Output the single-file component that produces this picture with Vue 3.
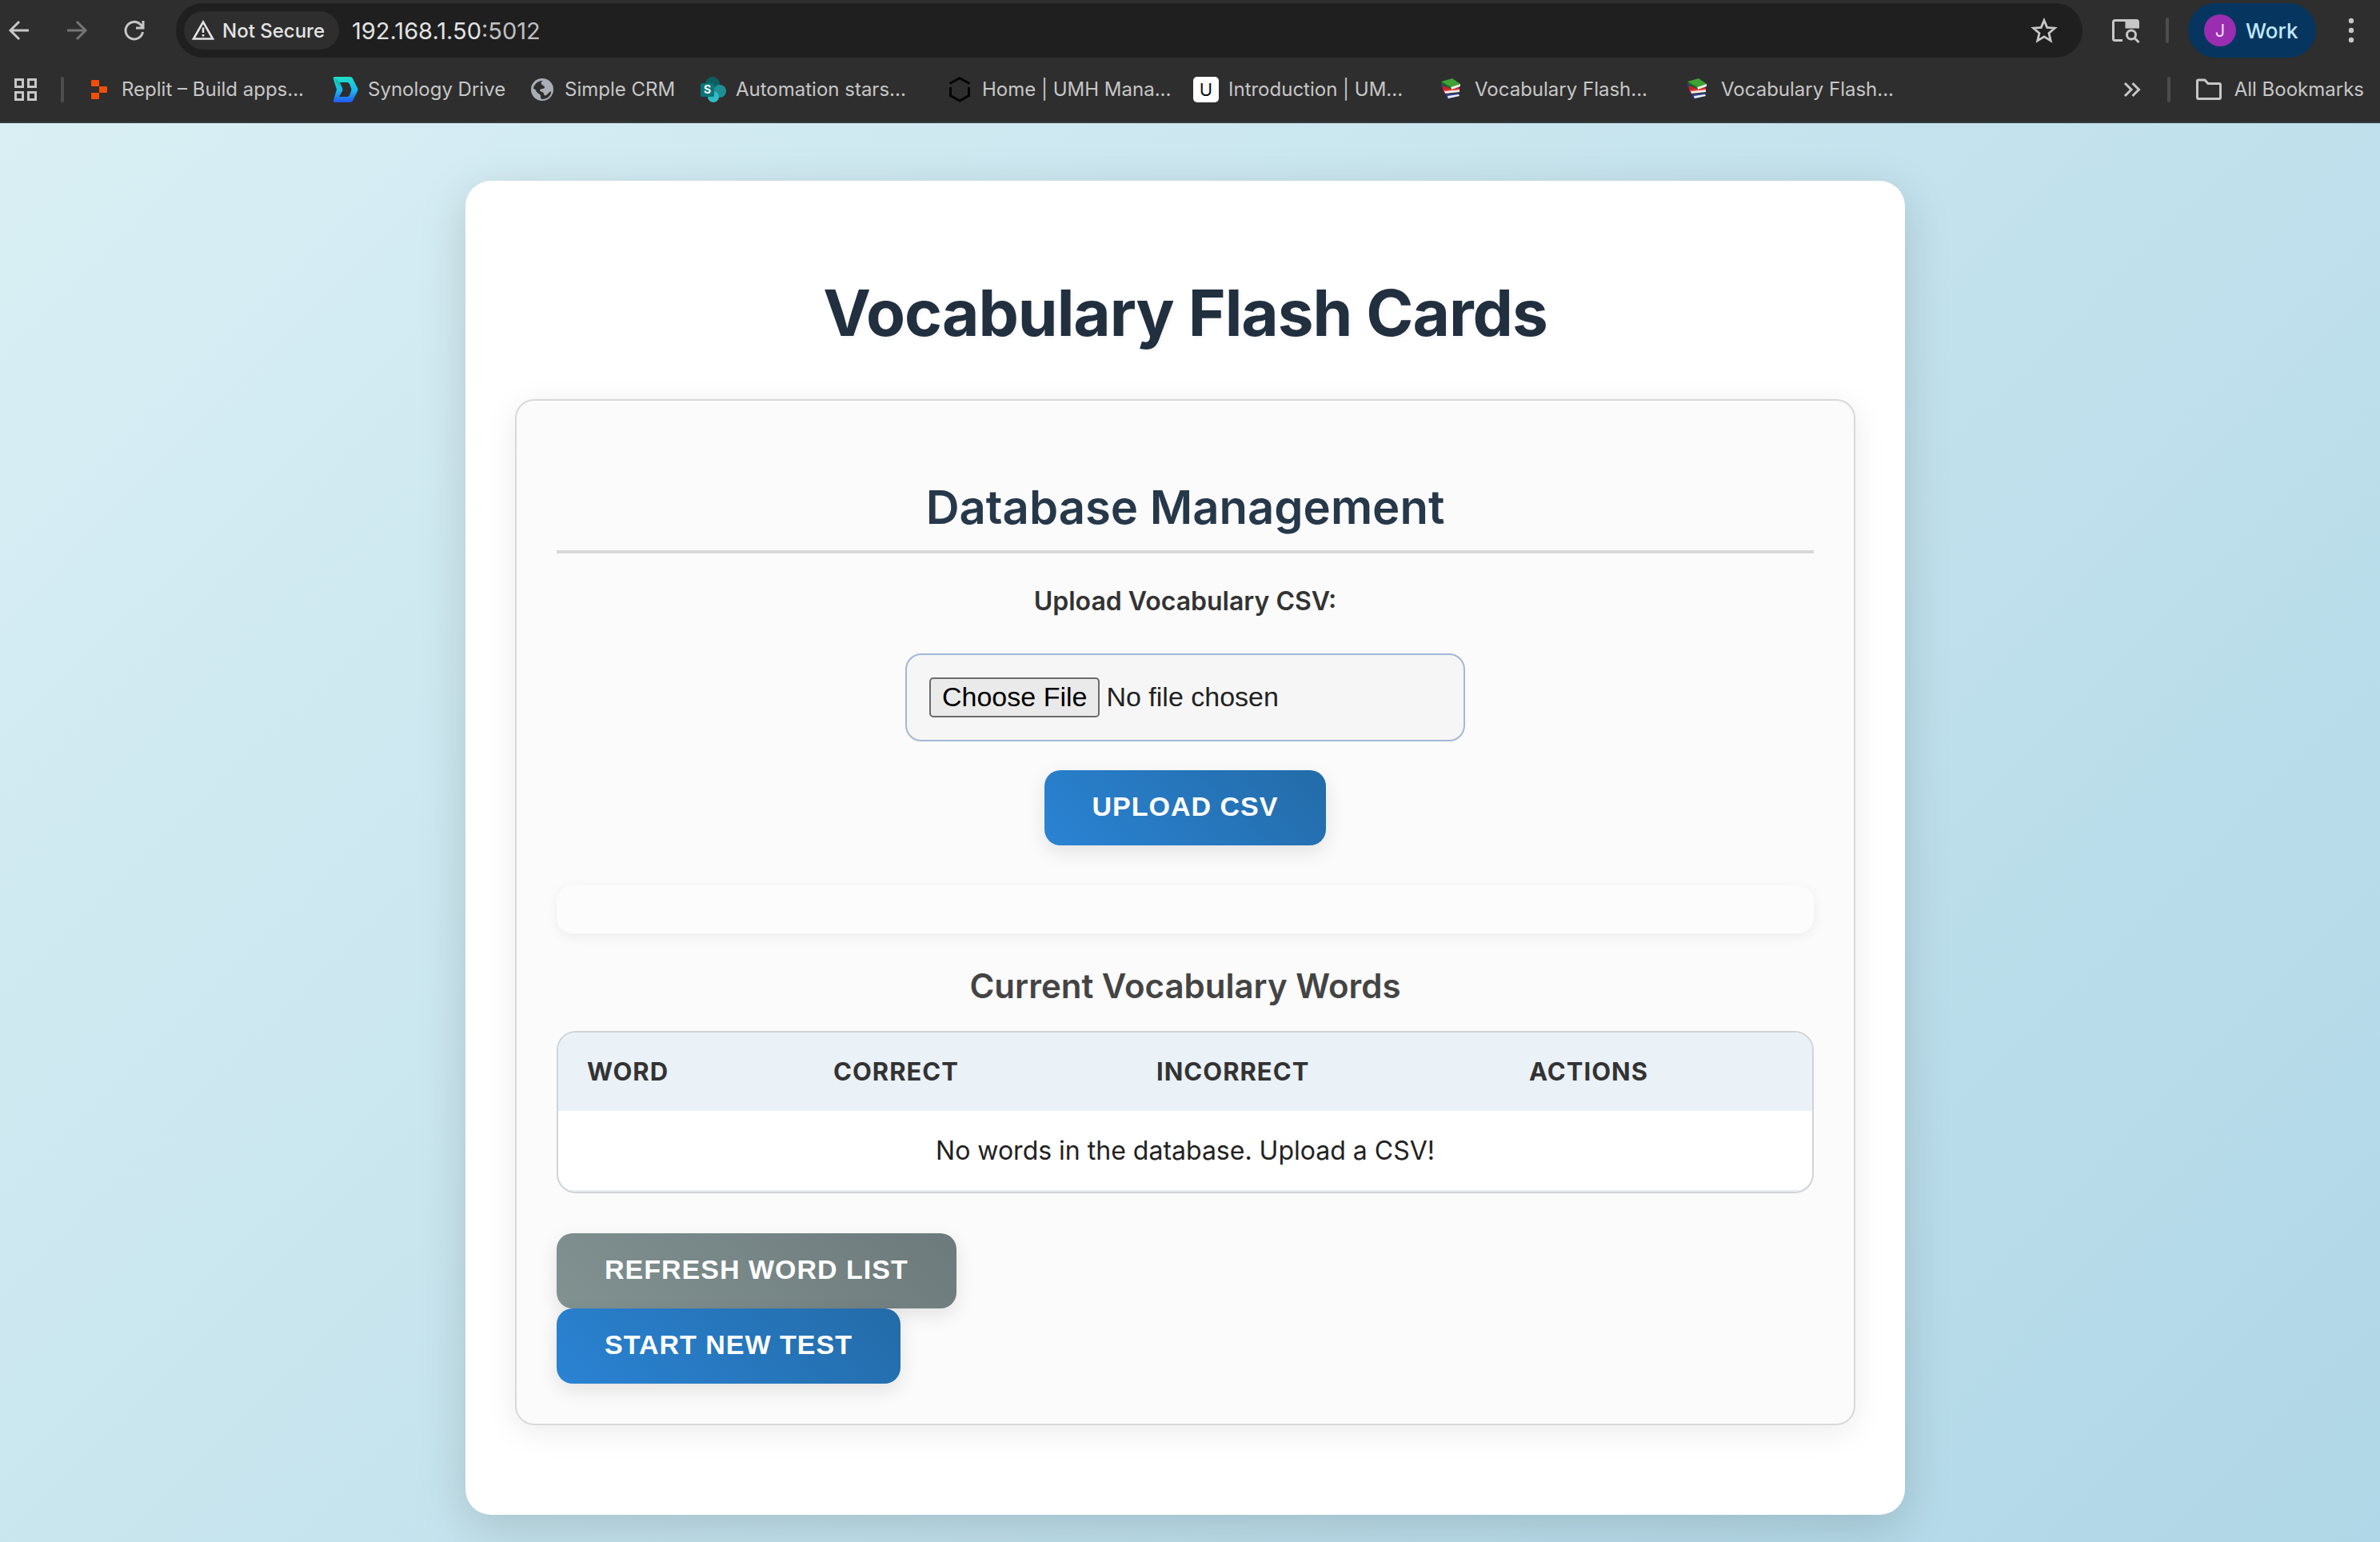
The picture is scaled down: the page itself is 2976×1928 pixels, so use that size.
<script setup>
import { ref } from 'vue'

const bookmarks = [
  { label: 'Replit – Build apps...', icon: 'replit', size: 'full' },
  { label: 'Synology Drive', icon: 'synology', size: 'mid' },
  { label: 'Simple CRM', icon: 'globe', size: 'small' },
  { label: 'Automation stars...', icon: 'sharepoint', size: 'full' },
  { label: 'Home | UMH Mana...', icon: 'umh', size: 'full' },
  { label: 'Introduction | UM...', icon: 'intro', size: 'full' },
  { label: 'Vocabulary Flash...', icon: 'books', size: 'full' },
  { label: 'Vocabulary Flash...', icon: 'books', size: 'full' },
]
const columns = ['Word', 'Correct', 'Incorrect', 'Actions']
const address = ref('192.168.1.50:5012')
</script>

<template>
  <div class="window">
    <header class="chrome">
      <div class="toolbar">
        <nav class="nav">
          <button class="icon-btn" aria-label="Back">
            <svg width="32" height="32" viewBox="0 0 32 32" fill="none" stroke="#c7c7c7" stroke-width="3"><path d="M28 16H6M16 5L5 16l11 11" /></svg>
          </button>
          <button class="icon-btn" aria-label="Forward">
            <svg width="32" height="32" viewBox="0 0 32 32" fill="none" stroke="#757575" stroke-width="3"><path d="M4 16h22M16 5l11 11-11 11" /></svg>
          </button>
          <button class="icon-btn" aria-label="Reload">
            <svg width="32" height="32" viewBox="0 0 32 32" fill="none" stroke="#c7c7c7" stroke-width="3"><path d="M26.500 18A10.800 10.800 0 1 1 23.500 8.500L27 12M27 4v9h-9" /></svg>
          </button>
        </nav>
        <div class="omnibox">
          <button class="chip">
            <svg width="30" height="28" viewBox="0 0 30 28" fill="none" stroke="#e3e3e3" stroke-width="2.600"><path d="M15 3.500L27 24.500H3z" /><path d="M15 10.500v6.500M15 19v2.600" /></svg>
            <span>Not Secure</span>
          </button>
          <div class="url" role="textbox" aria-label="Address">{{ address.split(':')[0] }}<span class="port">:{{ address.split(':')[1] }}</span></div>
          <button class="icon-btn star" aria-label="Bookmark this page">
            <svg width="36" height="36" viewBox="0 0 36 36" fill="none" stroke="#c7c7c7" stroke-width="2.800"><path d="M18 5.500l3.700 8.900 9.600.8-7.300 6.300 2.200 9.400-8.200-5-8.200 5 2.200-9.400-7.300-6.300 9.600-.8z" /></svg>
          </button>
        </div>
        <div class="tools">
          <button class="icon-btn" aria-label="Search tabs">
            <svg width="36" height="36" viewBox="0 0 36 36" fill="none" stroke="#c7c7c7" stroke-width="3"><path d="M14 30.500H4.500a2 2 0 0 1-2-2v-21a2 2 0 0 1 2-2h27a2 2 0 0 1 2 2V14H19V6" /><path d="M19 5h15v10H19z" fill="#c7c7c7" stroke="none" /><circle cx="25" cy="23.500" r="5.500" /><path d="M29 27.500l5.500 5.500" /></svg>
          </button>
          <span class="sep"></span>
          <button class="profile"><span class="avatar">J</span><span>Work</span></button>
          <button class="icon-btn" aria-label="Menu">
            <svg width="8" height="32" viewBox="0 0 8 32" fill="#c7c7c7"><circle cx="4" cy="4" r="3.200" /><circle cx="4" cy="16" r="3.200" /><circle cx="4" cy="28" r="3.200" /></svg>
          </button>
        </div>
      </div>
      <div class="bookmarks">
        <button class="icon-btn" aria-label="Apps">
          <svg width="32" height="32" viewBox="0 0 32 32" fill="none" stroke="#c7c7c7" stroke-width="3"><path d="M3.500 3.500h9v9h-9zM19.500 3.500h9v9h-9zM3.500 19.500h9v9h-9zM19.500 19.500h9v9h-9z" /></svg>
        </button>
        <span class="sep"></span>
        <nav class="links">
          <a v-for="(b, i) in bookmarks" :key="i" href="#" class="bookmark" :class="b.size">
            <svg v-if="b.icon === 'replit'" width="32" height="32" viewBox="0 0 32 32" fill="#f04e0b"><path d="M7 4h8q1 0 1 1v7H7q-1 0-1-1V5q0-1 1-1zM16 12h9q1 0 1 1v6q0 1-1 1h-9zM7 20h9v7q0 1-1 1H7q-1 0-1-1v-6q0-1 1-1z" /></svg>
            <svg v-else-if="b.icon === 'synology'" width="32" height="32" viewBox="0 0 32 32">
              <defs><linearGradient id="drive" x1="0" y1="0" x2="0" y2="1"><stop offset="0" stop-color="#1fe0c4" /><stop offset=".55" stop-color="#19b4f0" /><stop offset="1" stop-color="#2458f0" /></linearGradient></defs>
              <path fill="url(#drive)" fill-rule="evenodd" d="M3 0h19q2 0 3 2l6 12q1 2 0 4l-6 12q-1 2-3 2H3q-3 0-2-3l4-13L1 3Q0 0 3 0zM9 7l3 7q1 2 0 4L8 25h10q2 0 3-2l2-5q1-2 0-4l-2-5q-1-2-3-2z" />
              <path fill="#0fb5a8" d="M2 1l7 6 2 5H9L5 9z" opacity=".8" />
            </svg>
            <svg v-else-if="b.icon === 'globe'" width="32" height="32" viewBox="0 0 32 32"><circle cx="16" cy="16" r="14" fill="#a9adb5" /><path fill="#2e2e2e" d="M17 5c-2 1-3 2-2 4 1 2 4 2 4 4 0 3-5 1-6 4 0 2 4 1 5 4 0 2 1 3 3 2 3-2 3-4 6-5 1 5-5 10-11 10-2 0-2-2-2-4 0-3-5-3-6-7-1-2-3-2-3-2 0-5 6-11 12-10z" /></svg>
            <svg v-else-if="b.icon === 'sharepoint'" width="32" height="32" viewBox="0 0 32 32"><circle cx="15" cy="9" r="9" fill="#0b5f63" /><circle cx="24" cy="18" r="8" fill="#1f8f94" /><circle cx="16" cy="25" r="7" fill="#30bcc6" /><rect x="0" y="8" width="17" height="17" rx="1.500" fill="#0b7478" /><text x="8.500" y="21" text-anchor="middle" class="tile-s">S</text></svg>
            <svg v-else-if="b.icon === 'umh'" width="32" height="32" viewBox="0 0 32 32" fill="none" stroke="#050505" stroke-width="3"><path d="M3.500 8.500L16 1.800l12.500 6.700M4.500 13v10.500L16 30l11.500-6.500V13" /></svg>
            <svg v-else-if="b.icon === 'intro'" width="32" height="32" viewBox="0 0 32 32"><rect width="32" height="32" rx="5" fill="#fff" /><text x="16" y="24" text-anchor="middle" class="tile-u">U</text></svg>
            <svg v-else width="32" height="32" viewBox="0 0 32 32">
              <path fill="#2a3a80" d="M2 8q-1 4 2 7l3 2v-5z" />
              <path fill="#c9202c" d="M4 11l11 4 9-3 1 5-19 3q-3-4-2-9z" /><path fill="#f4e9e2" d="M6 17l19-1v3L7 21z" />
              <path fill="#d8343a" d="M6 16l19-2v2L7 18z" /><path fill="#2d3f8f" d="M8 22l16-2 1 4-15 4q-2-2-2-6z" /><path fill="#eceef6" d="M10 24l14-2 1 2-14 3z" />
              <path fill="#3fa235" d="M2 6l14-4 10 7-12 4z" /><path fill="#e9f1e2" d="M14 13l12-4v3l-11 4z" /><path fill="#1f6b23" d="M2 6l12 7 1 3L3 9z" />
            </svg>
            <span>{{ b.label }}</span>
          </a>
        </nav>
        <div class="bm-end">
          <button class="icon-btn" aria-label="More bookmarks">
            <svg width="24" height="24" viewBox="0 0 24 24" fill="none" stroke="#c7c7c7" stroke-width="3"><path d="M3 4l8 8-8 8M12.500 4l8 8-8 8" /></svg>
          </button>
          <span class="sep"></span>
          <button class="folder">
            <svg width="32" height="28" viewBox="0 0 32 28" fill="none" stroke="#c7c7c7" stroke-width="3" stroke-linejoin="round"><path d="M1.500 3.500a1.500 1.500 0 0 1 1.500-1.500h8l4 4.500h14a1.500 1.500 0 0 1 1.500 1.500v16a1.500 1.500 0 0 1-1.500 1.500H3A1.500 1.500 0 0 1 1.500 24z" /></svg>
            <span>All Bookmarks</span>
          </button>
        </div>
      </div>
    </header>

    <main class="page">
      <div class="card">
        <h1>Vocabulary Flash Cards</h1>
        <section class="panel">
          <h2>Database Management</h2>
          <form class="upload" @submit.prevent>
            <label for="csv">Upload Vocabulary CSV:</label>
            <input id="csv" type="file" accept=".csv" />
            <button class="btn primary" type="submit">Upload CSV</button>
          </form>
          <div class="message" role="status"></div>
          <h3>Current Vocabulary Words</h3>
          <div class="table-box">
            <table>
              <colgroup><col class="c1" /><col class="c2" /><col class="c3" /><col class="c4" /></colgroup>
              <thead>
                <tr><th v-for="c in columns" :key="c" scope="col">{{ c }}</th></tr>
              </thead>
              <tbody>
                <tr><td colspan="4">No words in the database. Upload a CSV!</td></tr>
              </tbody>
            </table>
          </div>
          <div class="actions">
            <button class="btn secondary" type="button">Refresh Word List</button>
            <button class="btn primary" type="button">Start New Test</button>
          </div>
        </section>
      </div>
    </main>
  </div>
</template>

<style>
body {
  margin: 0;
}
</style>

<style scoped>
.window {
  display: flex;
  flex-direction: column;
  min-height: 100vh;
  font-family: Inter, "Liberation Sans", sans-serif;
  color: #222;
}
button {
  margin: 0;
  border: 0;
  padding: 0;
  background: none;
  color: inherit;
  font: inherit;
}
svg {
  display: block;
  flex: none;
}
.chrome {
  box-sizing: border-box;
  height: 154px;
  border-bottom: 2px solid #343a3c;
  padding-top: 4px;
  background: #2e2e2e;
  color: #c7c7c7;
  font-size: 24px;
}
.toolbar {
  display: flex;
  align-items: center;
  height: 68px;
}
.nav {
  display: flex;
  gap: 40px;
  width: 212px;
  padding-left: 8px;
}
.omnibox {
  display: flex;
  flex: 1;
  align-items: center;
  box-sizing: border-box;
  height: 68px;
  border-radius: 34px;
  padding: 0 30px 0 10px;
  background: #1f1f1f;
}
.chip {
  display: flex;
  align-items: center;
  gap: 9px;
  height: 48px;
  border-radius: 24px;
  padding: 0 18px 0 9px;
  background: #2e2e2e;
  color: #e3e3e3;
  font-weight: 500;
}
.url {
  flex: 1;
  margin-left: 16px;
  color: #e3e3e3;
  font-size: 29px;
}
.port {
  color: #c0c0c0;
}
.tools {
  display: flex;
  align-items: center;
  justify-content: flex-end;
  gap: 32px;
  padding: 0 32px 0 36px;
}
.sep {
  flex: none;
  width: 4px;
  height: 32px;
  border-radius: 2px;
  background: #4d4d4d;
}
.tools .sep {
  margin-right: -8px;
}
.profile {
  display: flex;
  align-items: center;
  gap: 12px;
  box-sizing: border-box;
  width: 160px;
  height: 68px;
  margin-right: 8px;
  border-radius: 34px;
  padding: 0 20px;
  background: #063660;
  color: #c2e7ff;
  font-size: 26px;
  font-weight: 500;
}
.avatar {
  width: 40px;
  border-radius: 50%;
  background: #9a2db0;
  color: #f3dcf7;
  font-size: 22px;
  font-weight: 400;
  line-height: 40px;
  text-align: center;
}
.bookmarks {
  display: flex;
  align-items: center;
  height: 80px;
  padding: 0 20px 0 16px;
}
.bookmarks > .sep {
  margin: 0 28px;
}
.links {
  display: flex;
  flex: 1;
  gap: 32px;
}
.bookmark {
  display: flex;
  align-items: center;
  gap: 12px;
  color: inherit;
  text-decoration: none;
  white-space: nowrap;
}
.bookmark span,
.folder span {
  padding-bottom: 2px;
}
.full {
  width: 276px;
}
.mid {
  width: 214px;
}
.small {
  width: 182px;
}
.tile-s {
  fill: #fff;
  font: 700 14px Inter, sans-serif;
}
.tile-u {
  fill: #111;
  font: 400 22px Inter, sans-serif;
}
.bm-end,
.folder {
  display: flex;
  align-items: center;
}
.bm-end {
  gap: 32px;
}
.folder {
  gap: 16px;
}
.page {
  flex: 1;
  padding: 72px 12px 35px 0;
  background: linear-gradient(135deg, #d9eff4, #b0d7e7);
}
.card {
  box-sizing: border-box;
  max-width: 1800px;
  margin: 0 auto;
  border-radius: 32px;
  padding: 112px 62px;
  background: #fff;
  box-shadow: 0 16px 60px rgba(0, 0, 0, 0.15);
}
h1,
h2,
h3 {
  margin: 0;
  text-align: center;
}
h1 {
  margin-bottom: 56px;
  color: #212f3f;
  font-size: 80px;
  line-height: 105px;
  letter-spacing: -1px;
  text-shadow: 2px 2px 4px rgba(0, 0, 0, 0.05);
}
.panel {
  border: 2px solid #d8d9da;
  border-radius: 24px;
  padding: 100px 50px 50px;
  background: #fbfbfb;
  box-shadow: 0 8px 40px rgba(0, 0, 0, 0.08);
}
h2 {
  border-bottom: 4px solid #d8d8d8;
  padding-bottom: 21px;
  color: #26384a;
  font-size: 58px;
  font-weight: 600;
  line-height: 66px;
}
.upload {
  display: flex;
  flex-direction: column;
  align-items: center;
}
.upload label {
  margin: 38px 0 44px;
  color: #333;
  font-size: 32px;
  font-weight: 600;
  line-height: 43px;
}
.upload input {
  box-sizing: border-box;
  width: 700px;
  height: 110px;
  margin-bottom: 36px;
  border: 2px solid #a3b8d6;
  border-radius: 20px;
  padding: 28px;
  background: #f6f6f6;
  color: #222;
  font: 34px "Liberation Sans", sans-serif;
}
.upload input::file-selector-button {
  box-sizing: border-box;
  height: 50px;
  margin-right: 8px;
  border: 2px solid #6b6b6b;
  border-radius: 5px;
  padding: 0 14px 2px;
  background: #eaeaea;
  color: #000;
  font: inherit;
}
.btn {
  height: 94px;
  border-radius: 20px;
  padding: 0 60px 3px;
  color: #fff;
  font: 700 34px "Liberation Sans", sans-serif;
  letter-spacing: 1px;
  text-transform: uppercase;
  box-shadow: 0 8px 24px rgba(0, 0, 0, 0.1);
}
.primary {
  background: linear-gradient(45deg, #2a83d3, #236ba8);
}
.secondary {
  background: linear-gradient(45deg, #819291, #6d7a7b);
}
.message {
  height: 60px;
  margin: 50px 0 38px;
  border-radius: 20px;
  background: #fcfcfc;
  box-shadow: 0 4px 16px rgba(0, 0, 0, 0.06);
}
h3 {
  margin-bottom: 28px;
  color: #444;
  font-size: 42px;
  font-weight: 600;
  line-height: 56px;
}
.table-box {
  overflow: hidden;
  border: 2px solid #d0d3d6;
  border-radius: 24px;
  background: #fff;
}
table {
  width: 100%;
  border-collapse: collapse;
  table-layout: fixed;
}
.c1 {
  width: 308px;
}
.c2 {
  width: 404px;
}
.c3 {
  width: 466px;
}
th,
td {
  box-sizing: border-box;
  padding: 0 36px;
  font-size: 32px;
}
th {
  height: 98px;
  padding-bottom: 2px;
  background: #eaf1f7;
  color: #333;
  font-size: 31px;
  font-weight: 700;
  letter-spacing: 1px;
  text-align: left;
  text-transform: uppercase;
}
td {
  height: 100px;
  border-bottom: 2px solid #e8edf0;
  text-align: center;
}
.actions {
  display: flex;
  flex-direction: column;
  align-items: flex-start;
  margin-top: 50px;
}
</style>
